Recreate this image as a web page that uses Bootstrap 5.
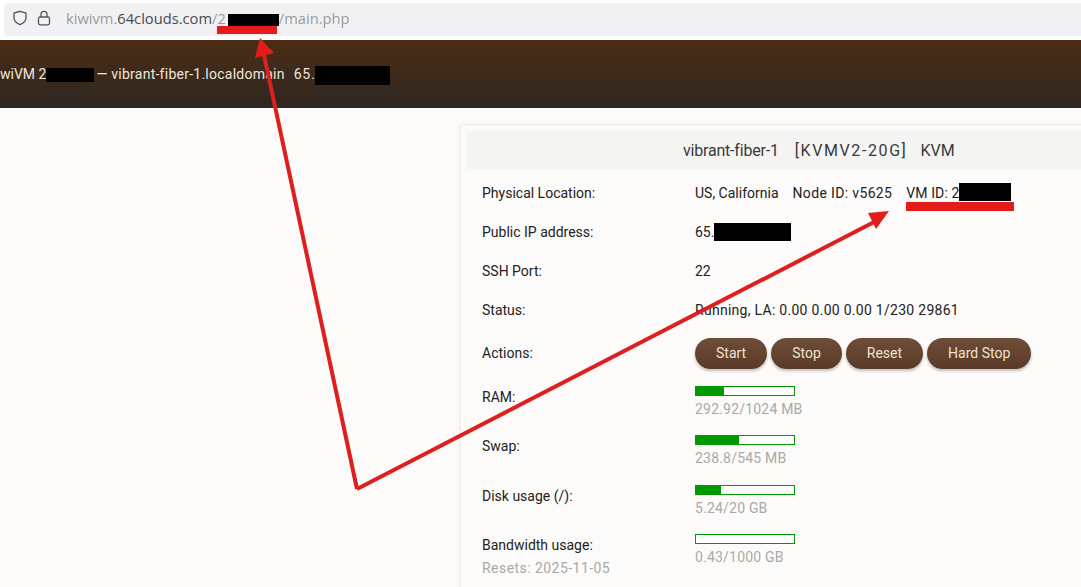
<!DOCTYPE html>
<html lang="en">
<head>
<meta charset="utf-8">
<title>KiwiVM</title>
<link rel="stylesheet" href="https://cdn.jsdelivr.net/npm/bootstrap@5.3.0/dist/css/bootstrap.min.css">
<style>
html,body{height:587px;overflow:hidden}
body{background:#fff;font-family:Roboto,"Liberation Sans",sans-serif;position:relative;color:#222}
.urlwrap{height:40px;padding:3px 0 4px 4px;background:#fff}
.urlbar{height:33px;background:#f1f1f4;border-radius:4px 0 0 4px;padding:0 0 3px 8px;gap:9px;font:14.7px "Open Sans","Noto Sans",sans-serif;color:#9a9aa0}
.urlbar b{font-weight:400;color:#4a4a50}
.urltext{margin-left:6px}
.redact{display:inline-block;background:#000;vertical-align:middle}
.rd-url{width:51px;height:12px;margin-left:2px}
.rd-top1{width:48px;height:14px}
.rd-top2{width:75px;height:19px}
.rd-vm{width:52px;height:18px;vertical-align:-3px}
.rd-ip{width:77px;height:18px;vertical-align:-4px}
.topband{height:68px;background:linear-gradient(#4c2d15,#2e2721);color:#efe6dc;font-size:14px;padding-top:1px;white-space:nowrap}
.topband .host{margin:0 9px 0 2px;letter-spacing:.25px}
.topband .addr{letter-spacing:.7px}
.pagearea{height:479px;background:#fdfbf9;padding:16px 0 0 460px}
.vmpanel{width:640px;height:480px;border:1px solid #ecebe9;border-right:0;border-bottom:0;border-radius:4px 0 0 0;padding:6px 0 0 6px;box-shadow:-2px 0 4px rgba(0,0,0,.03)}
.vmhead{height:38px;width:634px;background:#f4f4f3;font-size:16px;color:#3a3a3a;padding:2px 0 0 216px}
.vmhead .fiber{letter-spacing:-.2px}
.vmhead .plan{margin-left:16px;letter-spacing:1.6px}
.vmhead .virt{margin-left:13px}
.vmbody{padding:5px 0 0 15px;font-size:14px}
.vrow{height:39px}
.vrow.act{height:47px}
.vrow.usage{height:49px;padding-top:9px}
.vrow.usage.tall{height:50px}
.vlabel{width:213px;flex:none}
.usage .vlabel{padding-top:1px}
.locnode{margin-left:14px;letter-spacing:.35px}
.locvm{margin-left:14px;letter-spacing:.1px}
.wider{letter-spacing:.28px}
.dim{color:#aaa8a6;letter-spacing:.2px}
.dim.resetline{display:block;margin-top:2px;letter-spacing:.45px}
.pillbtn{height:31px;border-radius:16px;border:0;padding:0 21px;font-size:14px;line-height:31px;color:#f0e2d0;background:linear-gradient(#6e4d39,#5a3a26);box-shadow:0 2px 3px rgba(0,0,0,.25)}
.pillgap{gap:4px}
.meter{width:100px;height:10px;border:1px solid #090;background:#fff;margin-bottom:3px}
.meter i{display:block;height:100%;background:#090}
.arrows{position:absolute;left:0;top:0;width:1081px;height:587px;pointer-events:none}
</style>
</head>
<body>
<div class="urlwrap">
  <div class="urlbar d-flex align-items-center">
    <svg width="16" height="16" viewBox="0 0 16 16" fill="none" stroke="#55555c" stroke-width="1.3"><path d="M8 1.300 14 3v4.600c0 3.400-2.700 5.800-6 7.100-3.300-1.300-6-3.700-6-7.100V3z"/></svg>
    <svg width="14" height="16" viewBox="0 0 14 16" fill="none" stroke="#55555c" stroke-width="1.3"><rect x="1.500" y="7" width="11" height="7.800" rx="1.500"/><path d="M4 7V4.300a3 3 0 0 1 6 0V7"/></svg>
    <span class="urltext">kiwivm.<b>64clouds.com</b>/2<span class="redact rd-url"></span>/main.php</span>
  </div>
</div>
<div class="topband d-flex align-items-center">
  <div>wiVM 2<span class="redact rd-top1"></span><span class="host">— vibrant-fiber-1.localdomain</span><span class="addr">65.</span><span class="redact rd-top2"></span></div>
</div>
<div class="pagearea">
  <div class="vmpanel">
    <div class="vmhead d-flex align-items-center"><span class="fiber">vibrant-fiber-1</span><span class="plan">[KVMV2-20G]</span><span class="virt">KVM</span></div>
    <div class="vmbody">
      <div class="vrow d-flex align-items-center"><div class="vlabel">Physical Location:</div><div>US, California<span class="locnode">Node ID: v5625</span><span class="locvm">VM ID: 2<span class="redact rd-vm"></span></span></div></div>
      <div class="vrow d-flex align-items-center"><div class="vlabel">Public IP address:</div><div>65.<span class="redact rd-ip"></span></div></div>
      <div class="vrow d-flex align-items-center"><div class="vlabel">SSH Port:</div><div>22</div></div>
      <div class="vrow d-flex align-items-center"><div class="vlabel">Status:</div><div class="wider">Running, LA: 0.00 0.00 0.00 1/230 29861</div></div>
      <div class="vrow act d-flex align-items-center"><div class="vlabel">Actions:</div>
        <div class="d-flex pillgap"><button class="btn pillbtn" type="button">Start</button><button class="btn pillbtn" type="button">Stop</button><button class="btn pillbtn" type="button">Reset</button><button class="btn pillbtn" type="button">Hard Stop</button></div></div>
      <div class="vrow usage d-flex"><div class="vlabel">RAM:</div><div><div class="meter"><i style="width:29%"></i></div><div class="dim">292.92/1024 MB</div></div></div>
      <div class="vrow usage tall d-flex"><div class="vlabel">Swap:</div><div><div class="meter"><i style="width:44%"></i></div><div class="dim">238.8/545 MB</div></div></div>
      <div class="vrow usage d-flex"><div class="vlabel">Disk usage (/):</div><div><div class="meter"><i style="width:26%"></i></div><div class="dim">5.24/20 GB</div></div></div>
      <div class="vrow usage tall d-flex"><div class="vlabel">Bandwidth usage:<span class="dim resetline">Resets: 2025-11-05</span></div><div><div class="meter"><i style="width:0"></i></div><div class="dim">0.43/1000 GB</div></div></div>
    </div>
  </div>
</div>
<svg class="arrows" viewBox="0 0 1081 587">
  <rect x="217" y="26" width="60" height="8" fill="#e31b1b"/>
  <rect x="906" y="202" width="108" height="9" fill="#e31b1b"/>
  <path d="M357 489 264 55M357 489 878 220" fill="none" stroke="#dd1f1f" stroke-width="4"/>
  <path d="M260 38 274 53 255 58Z" fill="#e31b1b"/>
  <path d="M889 211 876 229 868 213Z" fill="#e31b1b"/>
</svg>
<script src="https://cdn.jsdelivr.net/npm/bootstrap@5.3.0/dist/js/bootstrap.bundle.min.js"></script>
</body>
</html>
